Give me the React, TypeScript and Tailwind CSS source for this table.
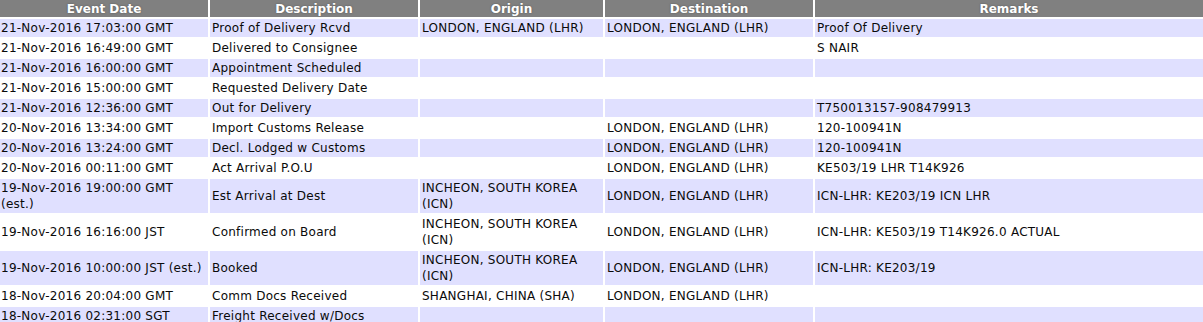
import React from "react";

type Row = [string[], string, string[], string, string];

const rows: Row[] = [
  [["21-Nov-2016 17:03:00 GMT"], "Proof of Delivery Rcvd", ["LONDON, ENGLAND (LHR)"], "LONDON, ENGLAND (LHR)", "Proof Of Delivery"],
  [["21-Nov-2016 16:49:00 GMT"], "Delivered to Consignee", [], "", "S NAIR"],
  [["21-Nov-2016 16:00:00 GMT"], "Appointment Scheduled", [], "", ""],
  [["21-Nov-2016 15:00:00 GMT"], "Requested Delivery Date", [], "", ""],
  [["21-Nov-2016 12:36:00 GMT"], "Out for Delivery", [], "", "T750013157-908479913"],
  [["20-Nov-2016 13:34:00 GMT"], "Import Customs Release", [], "LONDON, ENGLAND (LHR)", "120-100941N"],
  [["20-Nov-2016 13:24:00 GMT"], "Decl. Lodged w Customs", [], "LONDON, ENGLAND (LHR)", "120-100941N"],
  [["20-Nov-2016 00:11:00 GMT"], "Act Arrival P.O.U", [], "LONDON, ENGLAND (LHR)", "KE503/19 LHR T14K926"],
  [["19-Nov-2016 19:00:00 GMT", "(est.)"], "Est Arrival at Dest", ["INCHEON, SOUTH KOREA", "(ICN)"], "LONDON, ENGLAND (LHR)", "ICN-LHR: KE203/19 ICN LHR"],
  [["19-Nov-2016 16:16:00 JST"], "Confirmed on Board", ["INCHEON, SOUTH KOREA", "(ICN)"], "LONDON, ENGLAND (LHR)", "ICN-LHR: KE503/19 T14K926.0 ACTUAL"],
  [["19-Nov-2016 10:00:00 JST (est.)"], "Booked", ["INCHEON, SOUTH KOREA", "(ICN)"], "LONDON, ENGLAND (LHR)", "ICN-LHR: KE203/19"],
  [["18-Nov-2016 20:04:00 GMT"], "Comm Docs Received", ["SHANGHAI, CHINA (SHA)"], "LONDON, ENGLAND (LHR)", ""],
  [["18-Nov-2016 02:31:00 SGT"], "Freight Received w/Docs", [], "", ""],
];

const headers = ["Event Date", "Description", "Origin", "Destination", "Remarks"];

function Cell({ lines, bg, first }: { lines: string[]; bg: string; first?: boolean }) {
  return (
    <div
      className={`${bg} ${first ? "pl-[1px]" : "pl-[2px]"} py-[1px] flex flex-col justify-center whitespace-nowrap overflow-hidden min-h-[18px]`}
    >
      {lines.map((l, i) => (
        <span key={i} className="block leading-[16px]">
          {l}
        </span>
      ))}
    </div>
  );
}

export default function App() {
  return (
    <div
      className="w-[1203px] bg-white text-[12px] tracking-[0.25px] text-[#0a0a0a]"
      style={{ fontFamily: '"DejaVu Sans", Verdana, sans-serif' }}
    >
      <div className="grid grid-cols-[208px_208px_183px_208px_1fr] gap-[2px]">
        {headers.map((h) => (
          <div
            key={h}
            className="bg-[#808080] h-[17px] flex items-center justify-center font-bold text-white leading-[16px] tracking-normal [text-shadow:0_0_2px_#555555]"
          >
            {h}
          </div>
        ))}
        {rows.map((r, i) => {
          const bg = i % 2 === 0 ? "bg-[#e0e0ff]" : "bg-white";
          return (
            <React.Fragment key={i}>
              <Cell lines={r[0]} bg={bg} first />
              <Cell lines={r[1] ? [r[1]] : []} bg={bg} />
              <Cell lines={r[2]} bg={bg} />
              <Cell lines={r[3] ? [r[3]] : []} bg={bg} />
              <Cell lines={r[4] ? [r[4]] : []} bg={bg} />
            </React.Fragment>
          );
        })}
      </div>
    </div>
  );
}
